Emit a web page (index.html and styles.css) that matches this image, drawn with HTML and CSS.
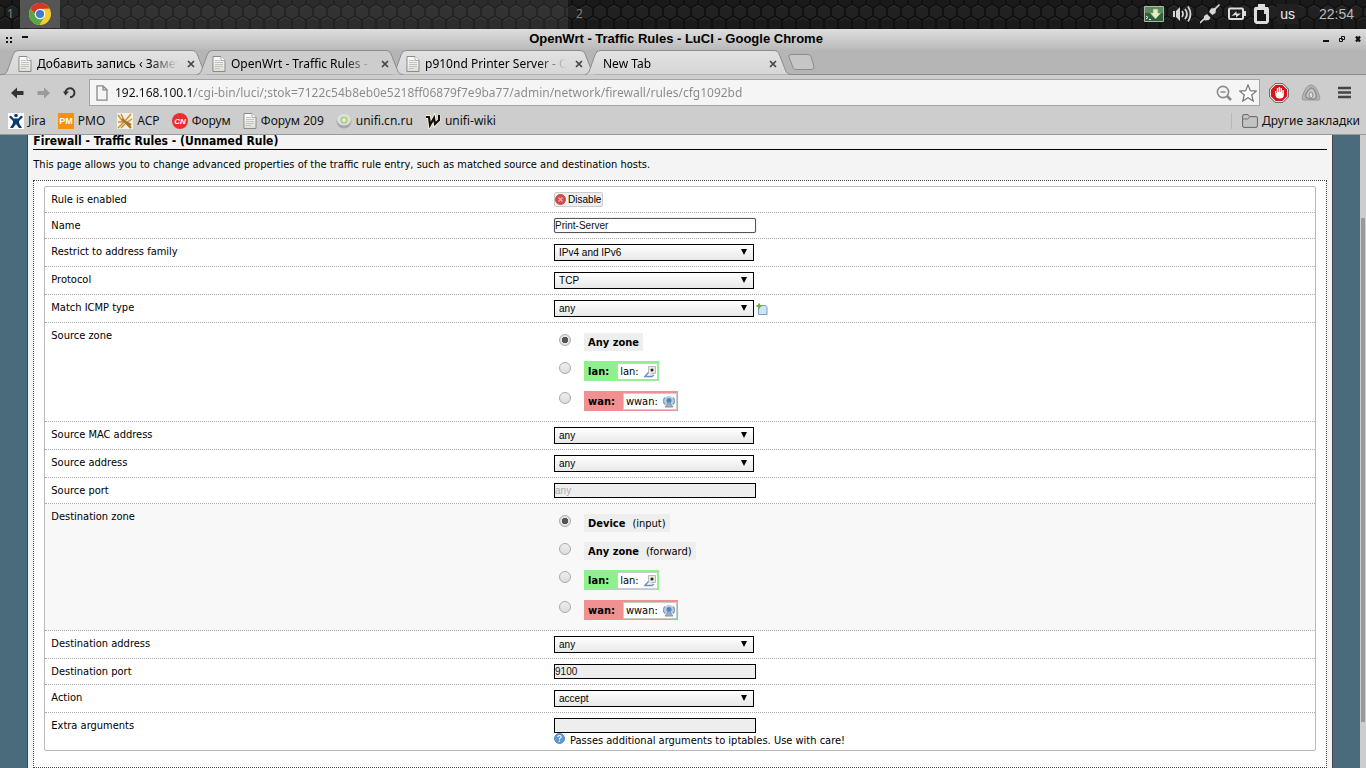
FILE: index.html
```html
<!DOCTYPE html>
<html lang="en">
<head>
<meta charset="utf-8">
<title>OpenWrt - Traffic Rules - LuCI</title>
<link rel="stylesheet" href="styles.css">
</head>
<body>
<svg class="defs" aria-hidden="true">
  <defs>
    <linearGradient id="paper" x1="0" y1="0" x2="0" y2="1"><stop offset="0" stop-color="#fff"/><stop offset="1" stop-color="#dcdcd8"/></linearGradient>
    <linearGradient id="tabfill" x1="0" y1="0" x2="0" y2="1"><stop offset="0" stop-color="#e2e2e2"/><stop offset="1" stop-color="#d6d6d6"/></linearGradient>
    <symbol id="doc" viewBox="0 0 14 16"><path d="M1 .5h8l4 4v11H.9z" fill="url(#paper)" stroke="#8b8b86"/><path d="M9 .5v4h4" fill="#fff" stroke="#aaa"/><path d="M3 4.500h5M3 6.500h8M3 8.500h8M3 10.500h8M3 12.500h5" stroke="#c3c3be"/></symbol>
    <symbol id="tabshape" viewBox="0 0 206 25" preserveAspectRatio="none"><path d="M0 24.500C3 24 4 22 5 19L10 5Q11.500 .5 15 .5H189Q193 .5 194.500 5L200 19C201 22 202 24 206 24.500"/></symbol>
    <symbol id="x" viewBox="0 0 8 8"><path d="M1 1l6 6M7 1l-6 6" stroke="#444" stroke-width="1.700"/></symbol>
    <symbol id="wired" viewBox="0 0 12 12"><path d="M4.500.5h7v7h-7z" fill="#e9e9e2" stroke="#bbb"/><circle cx="8" cy="4" r="1.500" fill="#222"/><path d="M3 7l3-1 3 3-2 1z" fill="#dfe7f0"/><path d="M4.500 6.500L.8 10.500h7.200l2-1.500" fill="none" stroke="#6a8dba" stroke-width="1.300"/></symbol>
    <symbol id="wifi" viewBox="0 0 12 12"><circle cx="6" cy="5" r="5" fill="#b9cde3"/><path d="M2 8.500a5 5 0 010-7M10 8.500a5 5 0 000-7" fill="none" stroke="#7c9fc6" stroke-width="1.500"/><circle cx="6" cy="4.500" r="2.500" fill="#5782b5"/><path d="M6 6l-4 5h8z" fill="#a5b0ba" stroke="#7c93ac"/></symbol>
  </defs>
</svg>

<header class="panel">
  <svg class="hex" aria-hidden="true"><defs><pattern id="hexes" width="14" height="24" patternUnits="userSpaceOnUse" x="5" y="4"><g fill="#232323" stroke="#0c0c0c" stroke-width="1.500"><path d="M7 0l7 4v8l-7 4-7-4V4z"/><path d="M7 16v8M0 12l7 4 7-4"/></g><path d="M2 4.500l5-3 5 3M9 16.500l5-3M0 13.500l5 3" fill="none" stroke="#333"/></pattern></defs><rect width="100%" height="100%" fill="url(#hexes)"/></svg>
  <div class="workspace active">
    <span class="num">1</span>
    <button class="task" aria-label="Google Chrome"><svg width="24" height="24" viewBox="0 0 24 24"><circle cx="12" cy="12" r="11" fill="#f6cd30"/><path d="M2.500 6.500A11 11 0 0121.500 6.500L12 7 8 14z" fill="#d8352a"/><path d="M2.500 6.500A11 11 0 0011.500 23L16.500 14.500 8 14.500z" fill="#56a845"/><circle cx="12" cy="12" r="5.300" fill="#fff"/><circle cx="12" cy="12" r="4.100" fill="#3d7cc9"/></svg></button>
  </div>
  <div class="workspace"><span class="num">2</span></div>
  <div class="tray">
    <svg width="20" height="16" viewBox="0 0 20 16"><path d="M.5.5h19v15H.5z" fill="#315f3b" stroke="#aab8aa"/><path d="M1 1h18v6H1z" fill="#5d8a60"/><path d="M9 3h5v4h3l-5.500 6L6 7h3z" fill="#dff0c9" stroke="#7aa060" stroke-width=".6"/><path d="M2 10l2 1.500L2 13M5 13.500h2" fill="none" stroke="#dfe"/></svg>
    <svg width="20" height="20" viewBox="0 0 20 20"><path d="M1 7h2v6H1zM4 7l4-4v14l-4-4z" fill="#d6d6d6"/><path d="M10 7q2 3 0 6M13 5q4 5 0 10M16 2.500q5 7.500 0 15" fill="none" stroke="#d6d6d6" stroke-width="1.800"/></svg>
    <svg width="20" height="20" viewBox="0 0 20 20"><path d="M0 19l6-6M13 7l6.500-6.500" stroke="#d6d6d6" stroke-width="1.600"/><path d="M4 12l3-2 3.500 3.500L9 16l-4 .5-1-1zM9 8l2-3.500 4-.5 1 1-.5 4-3 2z" fill="#d6d6d6"/></svg>
    <svg width="18" height="14" viewBox="0 0 18 14"><rect x="1" y="1.500" width="14" height="10.500" rx="1" fill="none" stroke="#ddd" stroke-width="2"/><path d="M16 4h2v5h-2z" fill="#ddd"/><path d="M3.500 9l5-5v2.500h4.500l-5 4V8z" fill="#ddd"/></svg>
    <svg width="15" height="20" viewBox="0 0 15 20"><path d="M4 0h7v3h3l1 2v13l-2 2H2l-2-2V5l1-2h3z" fill="#ddd"/><path d="M3 6h7v4h2v7H3z" fill="#151515"/></svg>
    <span class="layout">us</span>
    <time class="clock">22:54</time>
  </div>
</header>

<div class="titlebar">
  <svg width="24" height="10" viewBox="0 0 24 10" aria-hidden="true"><path d="M1 3h2v2H1zM5 3h2v2H5zM1 7h2v2H1zM5 7h2v2H5zM17 2h6v2h-6z" fill="#111"/></svg>
  <strong class="wintitle">OpenWrt - Traffic Rules - LuCI - Google Chrome</strong>
  <svg width="38" height="8" viewBox="0 0 38 8" aria-hidden="true"><path d="M0 5h6v2H0z" fill="#111"/><path d="M18.500 1.500h3v3h-3zM16.500 3.500h3v3h-3z" fill="#ccc" stroke="#111"/><path d="M33 1.500l4 5M37 1.500l-4 5" stroke="#111" stroke-width="2.200"/></svg>
</div>

<nav class="tabs" aria-label="Tabs">
  <div class="tab"><svg class="shape"><use href="#tabshape"/></svg><svg width="14" height="16"><use href="#doc"/></svg><button class="name">Добавить запись ‹ Замет</button><button class="close" aria-label="Close tab"><svg width="8" height="8"><use href="#x"/></svg></button></div>
  <div class="tab current"><svg class="shape"><use href="#tabshape"/></svg><svg width="14" height="16"><use href="#doc"/></svg><button class="name">OpenWrt - Traffic Rules - L</button><button class="close" aria-label="Close tab"><svg width="8" height="8"><use href="#x"/></svg></button></div>
  <div class="tab"><svg class="shape"><use href="#tabshape"/></svg><svg width="14" height="16"><use href="#doc"/></svg><button class="name">p910nd Printer Server - O</button><button class="close" aria-label="Close tab"><svg width="8" height="8"><use href="#x"/></svg></button></div>
  <div class="tab blank"><svg class="shape"><use href="#tabshape"/></svg><button class="name">New Tab</button><button class="close" aria-label="Close tab"><svg width="8" height="8"><use href="#x"/></svg></button></div>
  <button class="newtab" aria-label="New tab"><svg width="28" height="16" viewBox="0 0 28 16"><path d="M4 .5h17q2 0 3 2l3 10q0 3-2 3H9q-2 0-3-2L2 3Q1 .5 4 .5z" fill="#c6c6c6" stroke="#8c8c8c"/></svg></button>
</nav>

<div class="toolbar">
  <button aria-label="Back"><svg width="13" height="12" viewBox="0 0 13 12"><path d="M0 6l6-5.500v3.500h6.500v4H6v3.500z" fill="#333"/></svg></button>
  <button aria-label="Forward"><svg width="13" height="12" viewBox="0 0 13 12"><path d="M13 6L7 .5v3.500H.5v4H7v3.500z" fill="#9a9a9a"/></svg></button>
  <button aria-label="Reload"><svg width="13" height="13" viewBox="0 0 13 13"><path d="M2.500 7A4.500 4.500 0 117 11.200" fill="none" stroke="#333" stroke-width="1.900"/><path d="M0 5.500h6L2.500 9.500z" fill="#333"/></svg></button>
  <div class="omnibox">
    <svg width="12" height="16" viewBox="0 0 12 16"><path d="M1 .8h6l4 4v10.400H1zM7 .8v4h4" fill="none" stroke="#888" stroke-width="1.300"/></svg>
    <input type="text" aria-label="Address" value="192.168.100.1/cgi-bin/luci/;stok=7122c54b8eb0e5218ff06879f7e9ba77/admin/network/firewall/rules/cfg1092bd">
    <svg width="16" height="16" viewBox="0 0 16 16"><circle cx="7" cy="7" r="5.600" fill="none" stroke="#8a8a8a" stroke-width="1.600"/><path d="M4.500 7h5" stroke="#8a8a8a" stroke-width="1.500"/><path d="M11 11l4 4" stroke="#8a8a8a" stroke-width="2.500"/></svg>
    <svg width="18" height="18" viewBox="0 0 18 18"><path d="M9 1l2.300 5.700 6 .4-4.600 3.900 1.500 6L9 13.700 3.800 17l1.500-6L.7 7.100l6-.4z" fill="#fff" stroke="#777" stroke-width="1.200"/></svg>
  </div>
  <button aria-label="AdBlock"><svg width="20" height="20" viewBox="0 0 20 20"><path d="M6 .7h8L19.300 6v8L14 19.300H6L.7 14V6z" fill="#fff" stroke="#555"/><path d="M6.600 2h6.800L18 6.600v6.800L13.400 18H6.600L2 13.400V6.600z" fill="#d5161c"/><path d="M6 8h1.200v2h.6V5h1.400v4h.5V4h1.400v5h.5V5H13v5h.4V7h1.400v5q0 3.500-4 3.500T6.500 12z" fill="#fff"/></svg></button>
  <button aria-label="Extension"><svg width="20" height="18" viewBox="0 0 20 18"><path d="M10 1Q14 1 17 8t1 8H2Q0 15 3 8T10 1z" fill="#b5b5b5" stroke="#999"/><path d="M10 4q3 0 5 6t-5 5-5-5 5-6z" fill="#ccc" stroke="#8c8c8c" stroke-width="1.500"/><ellipse cx="10" cy="11" rx="2" ry="3" fill="#ddd" stroke="#888"/></svg></button>
  <button class="menu" aria-label="Menu"><svg width="13" height="13" viewBox="0 0 13 13"><path d="M0 2h13M0 6.500h13M0 11h13" stroke="#444" stroke-width="2.600"/></svg></button>
</div>

<nav class="bookmarks" aria-label="Bookmarks">
  <a href="#"><svg width="16" height="16" viewBox="0 0 16 16"><path d="M0 0h16v16H0z" fill="#fff"/><circle cx="8" cy="2.500" r="1.800" fill="#0d3b70"/><path d="M1 4l2-1.500L5.500 5.500h5L13 2.500 15 4l-4 4v2l3 5h-3l-3-4-3 4H2l3-5V8z" fill="#0d3b70"/></svg>Jira</a>
  <a href="#"><svg width="16" height="16" viewBox="0 0 16 16"><path d="M0 0h16v16H0z" fill="#f78f10"/><text x="8" y="11" text-anchor="middle" class="pm">PM</text></svg>PMO</a>
  <a href="#"><svg width="16" height="16" viewBox="0 0 16 16"><path d="M0 0h16v16H0z" fill="#f7efe0"/><path d="M1 2l6 8M4 1l4 8M8 8l6-7M9 10l6-4M1 9h6l-6 6M4 15l4-4" fill="none" stroke="#c99238" stroke-width="1.500"/><path d="M5 6l9 9M9 9l5 3" stroke="#a87325" stroke-width="2.200"/></svg>ACP</a>
  <a href="#"><svg width="16" height="16" viewBox="0 0 16 16"><circle cx="8" cy="8" r="8" fill="#ee2e2c"/><text x="8" y="11" text-anchor="middle" class="cn">CN</text></svg>Форум</a>
  <a href="#"><svg width="14" height="16"><use href="#doc"/></svg>Форум 209</a>
  <a href="#"><svg width="16" height="16" viewBox="0 0 16 16"><circle cx="8" cy="8" r="7.500" fill="#a8a8a8"/><ellipse cx="8" cy="6.500" rx="7" ry="6" fill="#dedede"/><circle cx="8" cy="7" r="2.800" fill="#e4eed6" stroke="#a6cf6e" stroke-width="1.500"/></svg>unifi.cn.ru</a>
  <a href="#"><svg width="16" height="16" viewBox="0 0 16 16"><path d="M1 4h3l1 8 4-7 1 6 4-4V2" fill="none" stroke="#fff3d8" stroke-width="4"/><path d="M1 4h3l1 8 4-7 1 6 4-4V2" fill="none" stroke="#111" stroke-width="2.200"/></svg>unifi-wiki</a>
  <a href="#" class="other"><svg width="16" height="14" viewBox="0 0 16 14"><path d="M.6 12V2Q.6.600 2 .6h4l1.500 2H14q1.400 0 1.400 1.400v8q0 1.400-1.400 1.400H2Q.6 13.400.6 12z" fill="#c3c3c3" stroke="#666"/><path d="M1 5h5l1.500-2" fill="none" stroke="#777"/></svg>Другие закладки</a>
</nav>

<div class="viewport">
  <main class="content">
    <h2>Firewall - Traffic Rules - (Unnamed Rule)</h2>
    <p class="descr">This page allows you to change advanced properties of the traffic rule entry, such as matched source and destination hosts.</p>
    <form class="section">
      <div class="fields">
        <div class="row"><span class="label">Rule is enabled</span><div class="value"><button type="button" class="disable"><svg width="11" height="11" viewBox="0 0 11 11"><circle cx="5.500" cy="5.500" r="5" fill="#d94848" stroke="#b95050"/><path d="M3.500 3.500l4 4M7.500 3.500l-4 4" stroke="#f0b0b0" stroke-width="1.400"/></svg>Disable</button></div></div>
        <div class="row"><label class="label" for="name">Name</label><div class="value"><input class="text named" id="name" type="text" value="Print-Server"></div></div>
        <div class="row"><label class="label" for="family">Restrict to address family</label><div class="value"><select id="family"><option>IPv4 and IPv6</option></select></div></div>
        <div class="row"><label class="label" for="proto">Protocol</label><div class="value"><select id="proto"><option>TCP</option></select></div></div>
        <div class="row"><label class="label" for="icmp">Match ICMP type</label><div class="value"><select id="icmp"><option>any</option></select><button type="button" class="add" aria-label="Add"><svg width="12" height="12" viewBox="0 0 12 12"><path d="M2.500 2.500h7l1.500 2v7H2.500z" fill="#cfe3f7" stroke="#7d9fc4"/><path d="M.5 3h5M3 .5v5" stroke="#72ad3c" stroke-width="2"/></svg></button></div></div>
        <div class="row"><span class="label">Source zone</span><div class="zones">
          <div class="zone"><input type="radio" name="src" id="s0" checked><label class="badge" for="s0"><b>Any zone</b></label></div>
          <div class="zone"><input type="radio" name="src" id="s1"><label class="badge net lan" for="s1"><b>lan:</b><span class="iface">lan:<svg width="12" height="12"><use href="#wired"/></svg></span></label></div>
          <div class="zone"><input type="radio" name="src" id="s2"><label class="badge net wan" for="s2"><b>wan:</b><span class="iface">wwan:<svg width="12" height="12"><use href="#wifi"/></svg></span></label></div>
        </div></div>
        <div class="row"><label class="label" for="mac">Source MAC address</label><div class="value"><select id="mac"><option>any</option></select></div></div>
        <div class="row"><label class="label" for="saddr">Source address</label><div class="value"><select id="saddr"><option>any</option></select></div></div>
        <div class="row"><label class="label" for="sport">Source port</label><div class="value"><input class="text" id="sport" type="text" placeholder="any"></div></div>
        <div class="row shaded"><span class="label">Destination zone</span><div class="zones">
          <div class="zone"><input type="radio" name="dst" id="d0" checked><label class="badge" for="d0"><b>Device</b> (input)</label></div>
          <div class="zone"><input type="radio" name="dst" id="d1"><label class="badge" for="d1"><b>Any zone</b> (forward)</label></div>
          <div class="zone"><input type="radio" name="dst" id="d2"><label class="badge net lan" for="d2"><b>lan:</b><span class="iface">lan:<svg width="12" height="12"><use href="#wired"/></svg></span></label></div>
          <div class="zone"><input type="radio" name="dst" id="d3"><label class="badge net wan" for="d3"><b>wan:</b><span class="iface">wwan:<svg width="12" height="12"><use href="#wifi"/></svg></span></label></div>
        </div></div>
        <div class="row"><label class="label" for="daddr">Destination address</label><div class="value"><select id="daddr"><option>any</option></select></div></div>
        <div class="row"><label class="label" for="dport">Destination port</label><div class="value"><input class="text" id="dport" type="text" value="9100"></div></div>
        <div class="row"><label class="label" for="action">Action</label><div class="value"><select id="action"><option>accept</option></select></div></div>
        <div class="row"><label class="label" for="extra">Extra arguments</label><div class="value last"><input class="text" id="extra" type="text"><p class="help"><svg width="11" height="11" viewBox="0 0 11 11"><circle cx="5.500" cy="5.500" r="5" fill="#5b9bd5" stroke="#5a88b4"/><path d="M3.800 4q0-1.500 1.700-1.500T7.200 4q0 .8-1.700 1.500v1M5.500 7.500v1.300" fill="none" stroke="#fff" stroke-width="1.200"/></svg>Passes additional arguments to iptables. Use with care!</p></div></div>
      </div>
    </form>
  </main>
  <div class="scrollbar"><div class="thumb"></div></div>
</div>
</body>
</html>
```
FILE: styles.css
```css
* { box-sizing: border-box; }
body {
  margin: 0;
  height: 100vh;
  display: flex;
  flex-direction: column;
  overflow: hidden;
  background: #cdcdcd;
  color: #000;
  font: 12px/16px "Noto Sans", "Open Sans", sans-serif;
}
button { margin: 0; padding: 0; border: 0; background: none; color: inherit; font: inherit; display: flex; align-items: center; }
svg { flex: none; display: block; }
h2, p { margin: 0; }
.defs { position: absolute; width: 0; height: 0; }

/* desktop panel */
.panel { position: relative; flex: none; height: 29px; display: flex; background: #1a1a1a; overflow: hidden; }
.hex { position: absolute; inset: 0; width: 100%; height: 100%; opacity: .8; }
.workspace { position: relative; flex: 0 0 568px; display: flex; align-items: center; padding-bottom: 2px; color: #808080; }
.workspace.active { background: linear-gradient(90deg, transparent 20px, rgba(255, 255, 255, .08) 20px); }
.workspace + .workspace { flex: 1; padding-left: 1px; }
.num { width: 20px; padding-left: 7px; }
.task { width: 40px; height: 28px; justify-content: center; background: #555; }
.tray { position: relative; display: flex; align-items: center; gap: 8px; padding: 0 12px 1px 0; color: #eee; }
.layout { padding: 2px 3px; background: #202020; font: 14px/16px "Liberation Sans", sans-serif; }
.clock { padding-left: 13px; color: #bbb; font: 14px/16px "Liberation Sans", sans-serif; }

/* window title */
.titlebar { flex: none; height: 21px; display: flex; align-items: center; justify-content: space-between; padding: 0 5px 2px; background: linear-gradient(#dedede, #b9b9b9); }
.wintitle { font: bold 13px/16px "Liberation Sans", sans-serif; }

/* tab strip */
.tabs { flex: none; height: 25px; display: flex; padding-left: 3px; background: #b5b5b5; border-bottom: 1px solid #8c8c8c; }
.tab { position: relative; width: 206px; height: 25px; margin-right: -12px; padding: 2px 14px 0 15px; display: flex; align-items: center; gap: 5px; }
.tab > * { position: relative; }
.tab .shape { position: absolute; left: 0; top: 0; width: 100%; height: 100%; fill: url(#tabfill); stroke: #8c8c8c; }
.tab.current { z-index: 1; }
.tab.current .shape { fill: #cdcdcd; }
.tab.blank { padding-left: 18px; }
.name { flex: 1; min-width: 0; overflow: hidden; white-space: nowrap; justify-content: flex-start; -webkit-mask-image: linear-gradient(90deg, #000 80%, transparent); mask-image: linear-gradient(90deg, #000 80%, transparent); }
.close { margin-left: 4px; }
.newtab { margin-left: 8px; }

/* toolbar */
.toolbar { flex: none; height: 31px; display: flex; align-items: center; padding: 4px 14px 0 11px; gap: 12px; }
.toolbar > button { min-width: 14px; }
.toolbar .menu { margin-left: 5px; }
.omnibox { flex: 1; height: 27px; display: flex; align-items: center; gap: 7px; margin-right: -3px; padding: 0 2px 0 6px; background: #f5f5f5; border: 1px solid #a3a3a3; }
.omnibox input {
  flex: 1; min-width: 0; padding: 0; border: 0; outline: 0; font: inherit; color: transparent;
  background: linear-gradient(90deg, #111 78px, #888 78px);
  -webkit-background-clip: text; background-clip: text;
}

/* bookmarks */
.bookmarks { flex: none; height: 29px; display: flex; align-items: center; gap: 12px; padding: 1px 6px 0 8px; border-bottom: 1px solid #999; }
.bookmarks a { display: flex; align-items: center; gap: 4px; color: #111; text-decoration: none; }
.bookmarks .other { margin-left: auto; padding-left: 10px; border-left: 1px solid #b8b8b8; }
.pm { fill: #fff; font: bold 9px "Liberation Sans", sans-serif; }
.cn { fill: #fff; font: italic bold 8px "Liberation Sans", sans-serif; }

/* page */
.viewport { flex: 1; min-height: 0; display: flex; overflow: hidden; background: #4a6b7c; font: 11px/14px "DejaVu Sans Condensed", "DejaVu Sans", sans-serif; }
.content { flex: 1; align-self: flex-start; margin: 0 2%; padding: 0 5px 20px; background: #f4f4f4; border: solid #444; border-width: 0 1px; }
h2 { border-bottom: 1px solid #000; font-size: 12px; line-height: 14px; margin-top: -1px; padding-bottom: 1px; }
.descr { padding: 8px 0; }
.section { padding: 5px 10px 16px; background: #fff; border: 1px dotted #444; }
.fields { border: 1px solid #bbb; border-radius: 2px; }
.row { display: grid; grid-template-columns: 40% 1fr; border-bottom: 1px dotted #aaa; }
.row:last-child { border-bottom: 0; }
.shaded { background: #f8f8f8; }
.label { padding: 6px 6px 4px; }
.value { display: flex; align-items: center; padding: 5px 1px; }
.value.last { flex-direction: column; align-items: flex-start; padding-bottom: 2px; }
select, .text, .disable { font: 10px/13px "Liberation Sans", sans-serif; }
select {
  appearance: none; width: 200px; height: 17px; padding: 0 4px; border: 1px solid #000; border-radius: 0; color: #000;
  background: url("data:image/svg+xml,%3Csvg xmlns='http://www.w3.org/2000/svg' width='6' height='6'%3E%3Cpath d='M0 0h6L3 6z'/%3E%3C/svg%3E") no-repeat right 6px top 4px, linear-gradient(#fff, #e8e8e8);
}
.text { width: 202px; height: 15px; padding: 0; border: 1px solid #000; background: #eee; color: #111; }
.text::placeholder { color: #aaa; }
.text.named { background: #fff; border-color: #555; border-radius: 2px; box-shadow: 0 0 1px #777; }
.disable { height: 15px; gap: 2px; padding: 0 1px 0 0; background: #eee; border: 1px solid #ccc; border-radius: 2px; }
.add { margin-left: 2px; }
.help { display: flex; gap: 5px; line-height: 15px; }

.zones { display: flex; flex-direction: column; gap: 10px; padding: 10px 6px; }
.zone { display: flex; gap: 13px; }
.zone input { width: 12px; height: 12px; margin: 1px 0 0; appearance: none; border: 1px solid #aaa; border-radius: 50%; background: linear-gradient(#eee, #ddd); }
.zone input:checked { background: radial-gradient(circle, #555 3px, #e4e4e4 3px); }
.badge { height: 18px; display: flex; align-items: center; gap: 7px; padding: 1px 4px 0; background: #eee; }
.badge.net { height: 20px; gap: 8px; padding: 1px 1px 0 4px; }
.lan { background: #90f090; }
.wan { background: #f09090; }
.iface { height: 17px; display: flex; align-items: center; gap: 5px; padding: 0 1px 0 2px; background: #fff; border: 1px solid #ccc; }

.scrollbar { flex: 0 0 6px; display: flex; flex-direction: column; padding-left: 1px; background: #cdcdcd; }
.scrollbar::before { content: ""; flex: 83; }
.scrollbar::after { content: ""; flex: 46; }
.thumb { flex: 504; width: 4px; background: #999; }
```
